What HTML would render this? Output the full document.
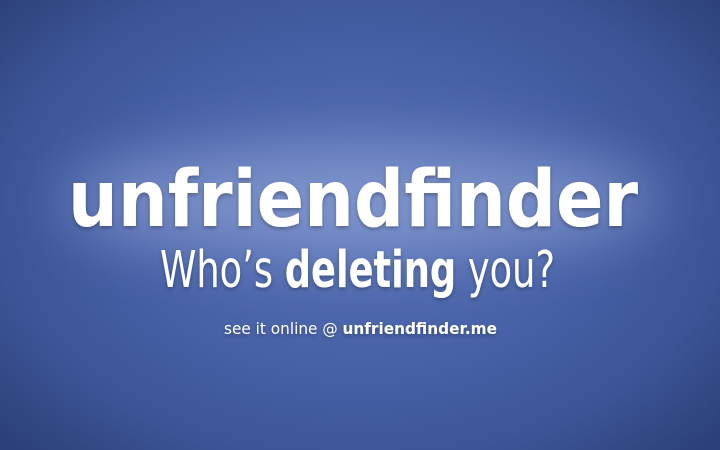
<!DOCTYPE html>
<html><head><style>
html,body{margin:0;padding:0;width:720px;height:450px;overflow:hidden}
body{background:radial-gradient(ellipse 480px 330px at 360px 215px,#5570b4 0%,#4862a8 45%,#3b5597 75%,#2c4178 100%)}
.glow{position:absolute;left:60px;top:145px;width:600px;height:110px;border-radius:50%;background:rgba(175,192,235,.45);filter:blur(30px)}
svg{position:absolute;left:0;top:0}
</style></head><body>
<div class="glow"></div>
<svg width="720" height="450">
<defs><filter id="s" x="-10%" y="-30%" width="120%" height="160%"><feGaussianBlur in="SourceAlpha" stdDeviation="2"/><feOffset dy="2"/><feComponentTransfer><feFuncA type="linear" slope="0.3"/></feComponentTransfer><feMerge><feMergeNode/><feMergeNode in="SourceGraphic"/></feMerge></filter></defs>
<g fill="#fff" font-family="'DejaVu Sans','Liberation Sans',sans-serif" filter="url(#s)">
<text x="68" y="226" font-size="78" font-weight="bold" textLength="570" lengthAdjust="spacingAndGlyphs">unfriendfinder</text>
<text x="160" y="287" font-size="51" textLength="395" lengthAdjust="spacingAndGlyphs">Who’s <tspan font-weight="bold">deleting</tspan> you?</text>
<text x="224" y="334" font-size="16" textLength="273" lengthAdjust="spacingAndGlyphs">see it online @ <tspan font-weight="bold">unfriendfinder.me</tspan></text>
</g>
</svg>
</body></html>
